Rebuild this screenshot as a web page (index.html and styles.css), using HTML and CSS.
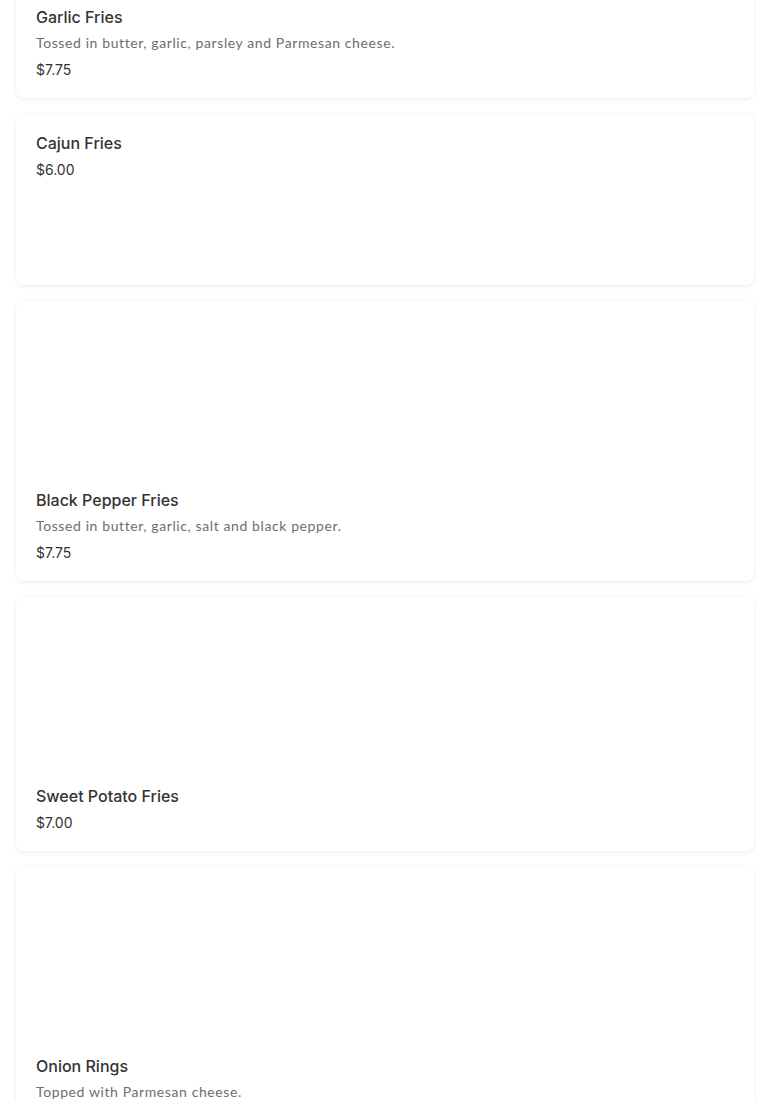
FILE: index.html
```html
<!DOCTYPE html>
<html lang="en">
<head>
<meta charset="utf-8">
<title>Menu</title>
<link rel="stylesheet" href="styles.css">
</head>
<body>
<main class="menu-list">
  <article class="item">
    <div class="item-body">
      <h3 class="item-title">Garlic Fries</h3>
      <p class="item-desc">Tossed in butter, garlic, parsley and Parmesan cheese.</p>
      <p class="item-price">$7.75</p>
    </div>
  </article>
  <article class="item item--tall">
    <div class="item-body">
      <h3 class="item-title">Cajun Fries</h3>
      <p class="item-price">$6.00</p>
    </div>
  </article>
  <article class="item">
    <div class="item-image"></div>
    <div class="item-body">
      <h3 class="item-title">Black Pepper Fries</h3>
      <p class="item-desc">Tossed in butter, garlic, salt and black pepper.</p>
      <p class="item-price">$7.75</p>
    </div>
  </article>
  <article class="item">
    <div class="item-image"></div>
    <div class="item-body">
      <h3 class="item-title">Sweet Potato Fries</h3>
      <p class="item-price">$7.00</p>
    </div>
  </article>
  <article class="item">
    <div class="item-image"></div>
    <div class="item-body">
      <h3 class="item-title">Onion Rings</h3>
      <p class="item-desc">Topped with Parmesan cheese.</p>
      <p class="item-price">$7.75</p>
    </div>
  </article>
</main>
</body>
</html>
```
FILE: styles.css
```css
html, body {
  margin: 0;
  padding: 0;
  background: #ffffff;
  overflow: hidden;
}

body {
  font-family: "Inter", "Noto Sans", "Liberation Sans", sans-serif;
  color: #333333;
}

.menu-list {
  display: flex;
  flex-direction: column;
  gap: 16px;
  padding: 0 16px;
  margin-top: -12px;
}

.item {
  background: #ffffff;
  border-radius: 8px;
  box-shadow: 0 1px 5px rgba(0, 0, 0, 0.08);
  display: flex;
  flex-direction: column;
}

.item--tall {
  min-height: 171px;
}

.item-image {
  height: 170px;
}

.item-body {
  padding: 16px 20px 14px;
}

.item-title {
  margin: 0;
  font-size: 16px;
  font-weight: 500;
  line-height: 26px;
  color: #333333;
}

.item-desc {
  margin: 0;
  font-family: "Lato", "Inter", sans-serif;
  font-size: 14px;
  line-height: 26px;
  color: #6e6e6e;
  letter-spacing: 0.6px;
}

.item-price {
  margin: 0;
  font-size: 14px;
  line-height: 28px;
  color: #333333;
}
```
